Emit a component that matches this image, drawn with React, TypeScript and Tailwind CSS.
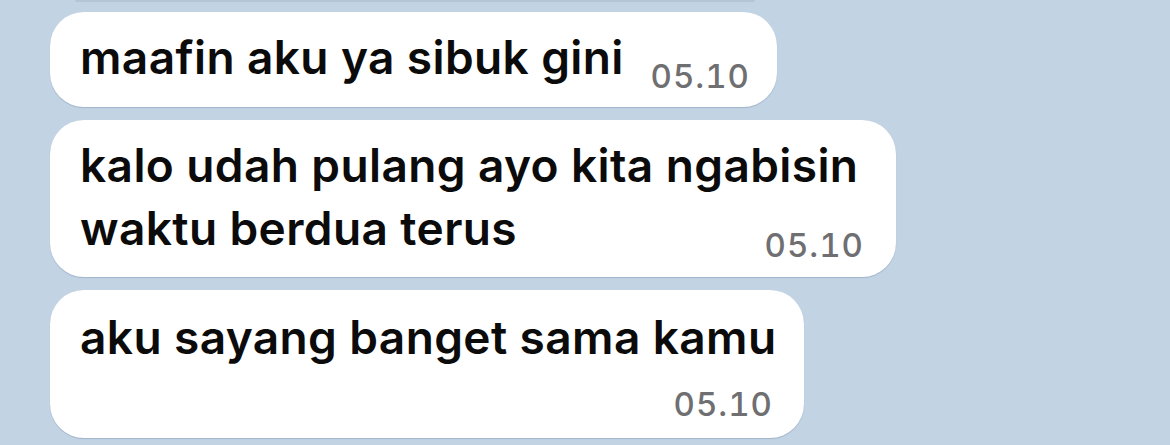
import React from "react";

const textCls =
  "text-[46px] leading-[63px] font-semibold text-[#0b0b0b] tracking-[0.4px] whitespace-nowrap";
const timeCls =
  "text-[33px] leading-[33px] font-medium text-[#6f6f72] tracking-[1px] tabular-nums whitespace-nowrap";

export default function App() {
  return (
    <div
      className="w-[1170px] h-[445px] overflow-hidden bg-[#c2d3e4] flex flex-col"
      style={{ fontFamily: "Inter, 'Noto Sans', sans-serif" }}
    >
      <div className="ml-[75px] w-[680px] h-[2px] bg-[#b4c5d6] rounded-b-full" />
      <div className="mt-[10px] ml-[50px] flex flex-col gap-[13px]">
        {/* bubble 1 */}
        <div className="w-[727px] h-[95px] bg-white rounded-[34px] shadow-[0_1px_1px_rgba(60,90,120,0.25)] pl-[30px] pr-[27px] pt-[14px] flex flex-row items-start">
          <span className={textCls}>maafin aku ya sibuk gini</span>
          <span className={`${timeCls} ml-auto mt-[34px]`}>05.10</span>
        </div>
        {/* bubble 2 */}
        <div className="w-[846px] h-[157px] bg-white rounded-[34px] shadow-[0_1px_1px_rgba(60,90,120,0.25)] pl-[30px] pr-[32px] pt-[14px] flex flex-col">
          <div className={textCls}>
            kalo udah pulang ayo kita ngabisin
            <br />
            waktu berdua terus
          </div>
          <span className={`${timeCls} self-end mt-[-31px]`}>05.10</span>
        </div>
        {/* bubble 3 */}
        <div className="w-[754px] h-[148px] bg-white rounded-[34px] shadow-[0_1px_1px_rgba(60,90,120,0.25)] pl-[30px] pr-[31px] pt-[16px] flex flex-col">
          <div className={textCls}>aku sayang banget sama kamu</div>
          <span className={`${timeCls} self-end mt-[19px]`}>05.10</span>
        </div>
      </div>
    </div>
  );
}
